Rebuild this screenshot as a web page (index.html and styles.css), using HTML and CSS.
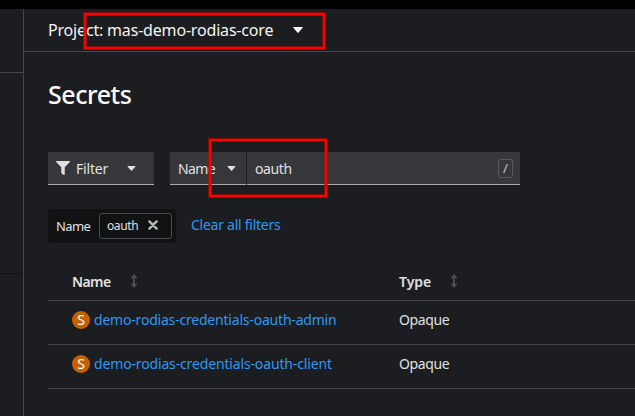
FILE: index.html
```html
<!DOCTYPE html>
<html lang="en">
<head>
<meta charset="utf-8">
<title>Secrets</title>
<link rel="stylesheet" href="styles.css">
</head>
<body>
<div class="masthead"></div>
<div class="page">
  <nav class="sidebar"><div class="nav-top"></div><div class="nav-group"></div></nav>
  <main class="main">
    <header class="project-bar">
      <span class="project-label">Project: mas-demo-rodias-core</span>
      <svg class="caret caret-project" viewBox="0 0 10 6"><path d="M.8 0h8.4q.8 0 .4.8L5.6 5.4q-.6.6-1.2 0L.4.8Q0 0 .8 0z"/></svg>
      <div class="mark mark-project"></div>
    </header>
    <section class="content">
      <h1 class="title">Secrets</h1>
      <div class="toolbar">
        <div class="control filter">
          <svg class="funnel" viewBox="0 0 512 512"><path d="M487.976 0H24.028C2.71 0-8.047 25.866 7.058 40.971L192 225.941V432c0 7.831 3.821 15.17 10.237 19.662l80 55.98C298.02 518.69 320 507.493 320 487.98V225.941l184.947-184.97C520.021 25.896 509.338 0 487.976 0z"/></svg>
          <span class="filter-label">Filter</span>
          <svg class="caret" viewBox="0 0 10 6"><path d="M.8 0h8.4q.8 0 .4.8L5.6 5.4q-.6.6-1.2 0L.4.8Q0 0 .8 0z"/></svg>
        </div>
        <div class="search">
          <div class="control attribute"><span class="attribute-label">Name</span>
            <svg class="caret" viewBox="0 0 10 6"><path d="M.8 0h8.4q.8 0 .4.8L5.6 5.4q-.6.6-1.2 0L.4.8Q0 0 .8 0z"/></svg>
          </div>
          <div class="control query"><span class="query-text">oauth</span><kbd class="key">/</kbd></div>
          <div class="mark mark-search"></div>
        </div>
      </div>
      <div class="chips">
        <div class="chip-group"><span class="chip-label">Name</span>
          <div class="chip"><span class="chip-text">oauth</span><svg class="close" viewBox="0 0 10 10"><path d="M1.4 1.4l7.2 7.2M8.6 1.4L1.4 8.6"/></svg></div>
        </div>
        <a class="clear">Clear all filters</a>
      </div>
      <div class="table">
        <div class="row head">
          <div class="cell"><span class="head-name">Name</span><svg class="sort" viewBox="0 0 8 14"><path d="M4 0l3 3.200v1H5v5.600h2v1L4 14 1 10.800v-1h2V4.200H1v-1z"/></svg></div>
          <div class="cell"><span class="head-type">Type</span><svg class="sort" viewBox="0 0 8 14"><path d="M4 0l3 3.200v1H5v5.600h2v1L4 14 1 10.800v-1h2V4.200H1v-1z"/></svg></div>
        </div>
        <div class="row">
          <div class="cell"><span class="badge">S</span><a class="link">demo-rodias-credentials-oauth-admin</a></div>
          <div class="cell"><span class="type">Opaque</span></div>
        </div>
        <div class="row">
          <div class="cell"><span class="badge">S</span><a class="link link-client">demo-rodias-credentials-oauth-client</a></div>
          <div class="cell"><span class="type">Opaque</span></div>
        </div>
      </div>
    </section>
  </main>
</div>
</body>
</html>
```
FILE: styles.css
```css
* { box-sizing: border-box; }
body { margin: 0; height: 416px; overflow: hidden; background: #1c1d20; color: #e0e0e0; font: 14px/20px "Noto Sans", sans-serif; white-space: nowrap; }
svg { display: block; flex: none; }
.masthead { height: 9px; background: #000; }
.page { display: flex; height: 407px; }
.sidebar { width: 24px; border-right: 1px solid #444548; }
.nav-top { height: 64px; border-bottom: 1px solid #444548; }
.nav-group { height: 201px; border-bottom: 1px solid #101214; }
.main { flex: 1; }
.project-bar { position: relative; display: flex; align-items: center; height: 43px; padding-left: 24px; border-bottom: 1px solid #444548; font-size: 16px; color: #f4f4f4; }
.project-label { width: 245px; letter-spacing: -.18px; }
.caret { width: 9px; height: 5px; fill: #e0e0e0; }
.caret-project { width: 10px; height: 6px; fill: #fff; }
.mark { position: absolute; border: 2px solid #f00; box-shadow: 0 0 0 1px rgba(200, 0, 0, .6), inset 0 0 0 1px rgba(200, 0, 0, .6); }
.mark-project { left: 60px; top: 4px; width: 241px; height: 36px; }
.content { padding: 24px 0 0 24px; }
.title { margin: 0; font-size: 25px; font-weight: 500; line-height: 36px; letter-spacing: -.45px; color: #fff; }
.toolbar { display: flex; gap: 16px; margin-top: 40px; }
.control { display: flex; align-items: center; height: 33px; background: #36373a; border-bottom: 1px solid #aaabac; padding: 2px 0 0 8px; }
.filter { width: 106px; }
.funnel { width: 14px; height: 14px; fill: #e0e0e0; margin: -3px 6px 0 0; }
.filter-label { width: 51px; letter-spacing: -.2px; }
.filter .caret, .attribute .caret { margin-top: -1px; }
.search { position: relative; display: flex; gap: 1px; width: 350px; }
.attribute { width: 76px; }
.attribute-label { width: 49px; letter-spacing: -.6px; }
.query { flex: 1; justify-content: space-between; padding-right: 7px; }
.query-text { letter-spacing: -.4px; }
.key { width: 15px; height: 19px; border: 1px solid #58595c; border-radius: 3px; font: 13px/17px "Noto Sans", sans-serif; text-align: center; margin-top: -2px; color: #c7c7c7; }
.mark-search { left: 39px; top: -13px; width: 118px; height: 58px; }
.chips { display: flex; align-items: center; gap: 15px; margin-top: 24px; }
.chip-group { display: flex; align-items: center; width: 128px; height: 34px; padding-left: 8px; border-radius: 3px; background: #101214; }
.chip-label { width: 43px; font-size: 13px; letter-spacing: -.6px; margin-top: -1px; }
.chip { display: flex; align-items: center; width: 73px; height: 26px; border: 1px solid #4b4c4f; border-radius: 3px; padding-left: 7px; font-size: 12px; }
.chip-text { width: 41px; letter-spacing: -.4px; }
.close { width: 10px; height: 10px; stroke: #b8b8b8; stroke-width: 2.4; fill: none; stroke-linecap: round; margin-top: -2px; }
.clear, .link { color: #2b9af3; }
.clear { letter-spacing: -.26px; margin-top: -2px; }
.link { letter-spacing: -.2px; }
.link-client { letter-spacing: -.15px; }
.type { letter-spacing: -.4px; }
.table { margin-top: 21px; }
.row { display: grid; grid-template-columns: 327px 1fr; height: 44px; border-bottom: 1px solid #444548; }
.head { height: 37px; font-weight: 600; }
.cell { display: flex; align-items: center; padding-left: 24px; padding-bottom: 5px; }
.head .cell { padding-bottom: 0; }
.head-name { width: 58px; letter-spacing: -.6px; }
.head-type { width: 51px; }
.sort { width: 8px; height: 14px; fill: #4b4c4f; margin-top: -2px; }
.badge { width: 18px; height: 18px; border-radius: 50%; background: #c46100; color: #fff; font-size: 14px; line-height: 18px; text-align: center; margin-right: 4px; }
```
